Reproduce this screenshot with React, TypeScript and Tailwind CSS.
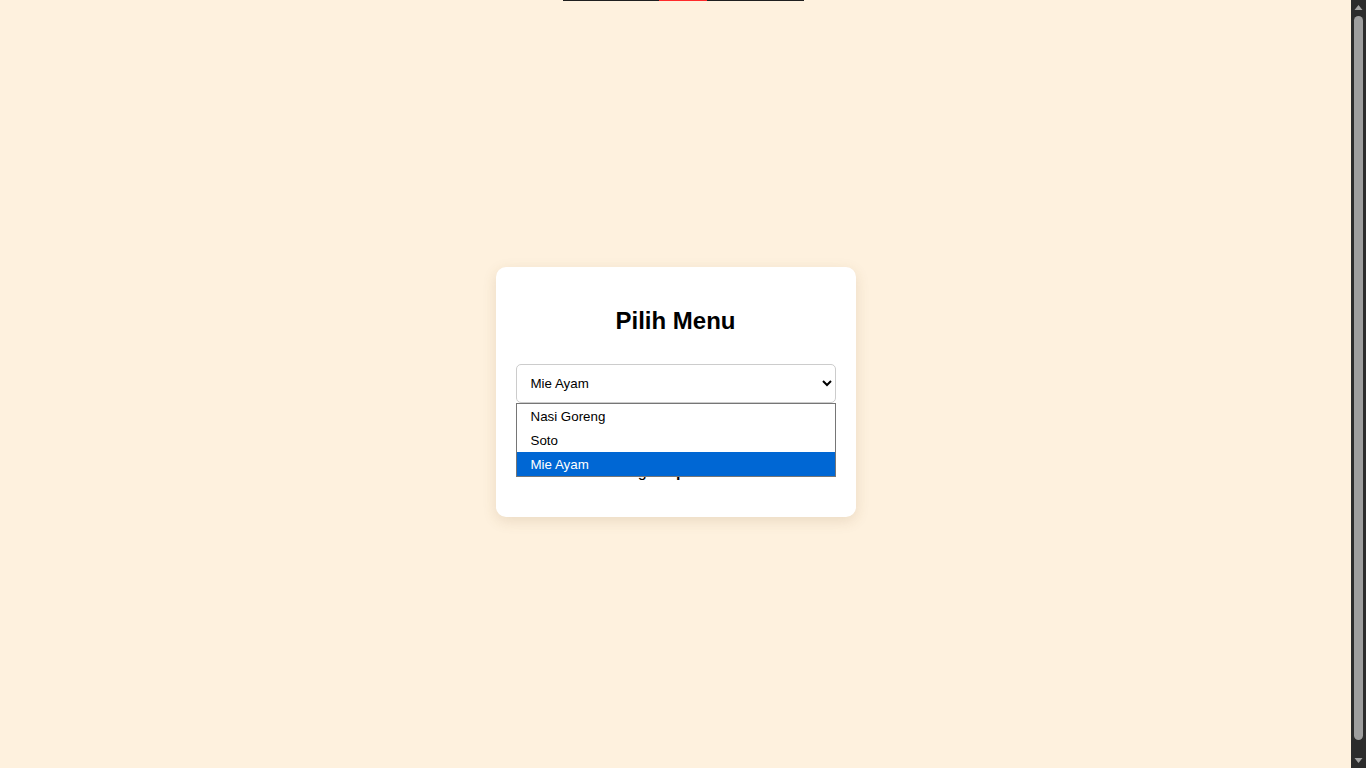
import { useState } from "react";

const menus = ["Nasi Goreng", "Soto", "Mie Ayam"];

const ScrollBar = () => (
  <div className="w-[15px] h-screen bg-[#2c2c2c] flex flex-col items-center">
    <svg width="15" height="15" viewBox="0 0 15 15" className="shrink-0">
      <path d="M3.5 10 L7.5 5 L11.5 10 Z" fill="#a3a3a3" />
    </svg>
    <div className="flex-1 w-[9px] my-[1px] rounded-[5px] bg-[#9e9e9e]" />
    <div className="h-[12px]" />
    <svg width="15" height="15" viewBox="0 0 15 15" className="shrink-0">
      <path d="M3.5 5 L11.5 5 L7.5 10 Z" fill="#a3a3a3" />
    </svg>
  </div>
);

const App = () => {
  const [menu, setMenu] = useState("Mie Ayam");

  return (
    <div className="flex h-screen overflow-hidden bg-[#fef1de] font-['Liberation_Sans',Arial,sans-serif]">
      <div className="flex-1">
        <div className="flex h-px ml-[563px] w-[241px]">
          <div className="w-[96px] bg-[#1f1f1f]" />
          <div className="w-[48px] bg-[#ff2a2a]" />
          <div className="flex-1 bg-[#1f1f1f]" />
        </div>

        <div className="h-[782px] flex items-center justify-center">
          <div className="w-[360px] bg-white rounded-[10px] p-5 shadow-[0_4px_14px_rgba(120,90,40,0.15)] text-center">
            <h2 className="mt-[20px] mb-[29px] text-2xl leading-[28px] font-bold text-black">Pilih Menu</h2>

            <div className="relative">
              <select
                value={menu}
                onChange={(e) => setMenu(e.target.value)}
                className="w-full h-[39px] px-[10px] text-[13.333px] text-black bg-white border border-[#cccccc] rounded-[5px]"
              >
                {menus.map((m) => (
                  <option key={m}>{m}</option>
                ))}
              </select>

              <ul className="absolute left-0 right-0 top-[39px] z-10 bg-white border border-[#767676] text-left text-[13.333px] text-black">
                {menus.map((m) => (
                  <li
                    key={m}
                    className={
                      m === menu
                        ? "h-6 leading-[26px] pl-[14px] bg-[#0067d4] text-white"
                        : "h-6 leading-[26px] pl-[14px]"
                    }
                  >
                    {m}
                  </li>
                ))}
              </ul>
            </div>

            <p className="mt-[60px] mb-4 text-base leading-[18px] text-black">
              Harga: <b>Rp 15.000</b>
            </p>
          </div>
        </div>
      </div>
      <ScrollBar />
    </div>
  );
};

export default App;
